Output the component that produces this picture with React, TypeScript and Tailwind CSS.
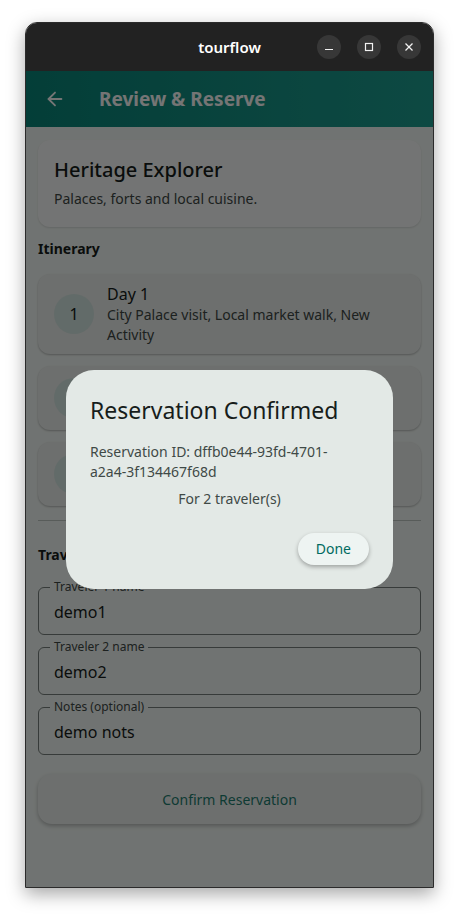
import { ArrowLeft } from "lucide-react";

const font = { fontFamily: '"Noto Sans", sans-serif' };

function WindowButton({ kind }: { kind: "min" | "max" | "close" }) {
  return (
    <div className="w-6 h-6 rounded-full bg-[#373737] flex items-center justify-center">
      <svg width="12" height="12" viewBox="0 0 12 12" fill="none" stroke="#f2f2f2" strokeWidth="1.2">
        {kind === "min" && <line x1="2" y1="8.5" x2="10" y2="8.5" />}
        {kind === "max" && <rect x="2.5" y="2.5" width="7" height="7" />}
        {kind === "close" && (
          <>
            <line x1="2.5" y1="2.5" x2="9.5" y2="9.5" />
            <line x1="9.5" y1="2.5" x2="2.5" y2="9.5" />
          </>
        )}
      </svg>
    </div>
  );
}

function DayCard({ n, lines }: { n: number; lines: string }) {
  return (
    <div className="min-h-[64px] rounded-xl bg-[#edf1ef] shadow-[0_1px_2px_rgba(0,0,0,0.25)] flex items-center gap-[13px] px-4 py-[9px]">
      <div className="w-10 h-10 shrink-0 rounded-full bg-[#d6e9e4] flex items-center justify-center text-[16px] text-[#171d1b]">
        {n}
      </div>
      <div className="flex flex-col">
        <div className="text-[16px] leading-[22px] text-[#171d1b]">Day {n}</div>
        <div className="text-[14px] leading-[20px] text-[#3f4946]">{lines}</div>
      </div>
    </div>
  );
}

function Field({ label, value }: { label: string; value: string }) {
  return (
    <div className="relative h-12 rounded-[6px] border border-[#79817e] flex items-center px-[15px]">
      <span className="absolute -top-[8px] left-[11px] px-[4px] bg-[#f5fbf8] text-[12px] leading-[14px] text-[#3f4946]">
        {label}
      </span>
      <span className="text-[16px] text-[#171d1b] mt-[2px]">{value}</span>
    </div>
  );
}

export default function App() {
  return (
    <div className="min-h-screen bg-white pt-[22px] pl-[25px]" style={font}>
      <div className="w-[409px] h-[866px] rounded-t-[12px] overflow-hidden border border-[#2b2b2b] shadow-[0_6px_18px_rgba(0,0,0,0.35)] flex flex-col">
        <div className="h-12 shrink-0 bg-[#222222] flex items-center relative">
          <div className="flex-1 text-center text-white font-semibold text-[15px]">tourflow</div>
          <div className="absolute right-[12px] top-[12px] flex gap-4">
            <WindowButton kind="min" />
            <WindowButton kind="max" />
            <WindowButton kind="close" />
          </div>
        </div>

        <div className="relative flex-1 bg-[#f5fbf8] flex flex-col">
          <div className="h-14 shrink-0 bg-gradient-to-r from-[#08877a] to-[#1ea092] flex items-center pl-[18px] gap-[33px]">
            <ArrowLeft size={22} color="#ffffff" strokeWidth={2} />
            <div className="text-white font-bold text-[19px]">Review &amp; Reserve</div>
          </div>

          <div className="px-[12px] pt-[13px] flex flex-col">
            <div className="rounded-xl bg-[#fbfdfc] shadow-[0_1px_2px_rgba(0,0,0,0.12)] px-4 pt-[16px] pb-[18px]">
              <div className="text-[20px] leading-[28px] font-medium text-[#171d1b]">Heritage Explorer</div>
              <div className="text-[14px] leading-[20px] mt-[5px] text-[#3f4946]">Palaces, forts and local cuisine.</div>
            </div>

            <div className="mt-[12px] text-[14px] font-bold leading-[20px] text-[#171d1b]">Itinerary</div>

            <div className="mt-[15px] flex flex-col gap-3">
              <DayCard n={1} lines="City Palace visit, Local market walk, New Activity" />
              <DayCard n={2} lines="Amber Fort, Cooking class" />
              <DayCard n={3} lines="Heritage walk, Museum" />
            </div>

            <div className="mt-[14px] h-px bg-[#bfc9c5]" />

            <div className="mt-[24px] text-[14px] font-bold leading-[20px] text-[#171d1b]">Travelers</div>

            <div className="mt-[22px] flex flex-col gap-3">
              <Field label="Traveler 1 name" value="demo1" />
              <Field label="Traveler 2 name" value="demo2" />
              <Field label="Notes (optional)" value="demo nots" />
            </div>

            <button className="mt-[19px] h-[50px] rounded-[14px] bg-[#edf2f0] shadow-[0_2px_4px_rgba(0,0,0,0.25)] text-[14px] text-[#1d8070]">
              Confirm Reservation
            </button>
          </div>

          <div className="absolute inset-0 bg-[rgba(0,0,0,0.54)] flex items-center justify-center">
            <div className="w-[327px] h-[219px] rounded-[28px] bg-[#e3e9e6] px-6 pt-6 pb-6 flex flex-col">
              <div className="text-[23px] leading-[32px] text-[#171d1b]">Reservation Confirmed</div>
              <div className="mt-[16px] text-[14px] leading-[20px] text-[#3f4946]">
                Reservation ID: dffb0e44-93fd-4701-
                <br />
                a2a4-3f134467f68d
              </div>
              <div className="mt-[7px] text-center text-[14px] leading-[20px] text-[#3f4946]">For 2 traveler(s)</div>
              <div className="mt-auto flex justify-end">
                <button className="h-8 px-[18px] rounded-full bg-[#eef4f2] shadow-[0_2px_4px_rgba(0,0,0,0.3)] text-[14px] text-[#006a60]">
                  Done
                </button>
              </div>
            </div>
          </div>
        </div>
      </div>
    </div>
  );
}
